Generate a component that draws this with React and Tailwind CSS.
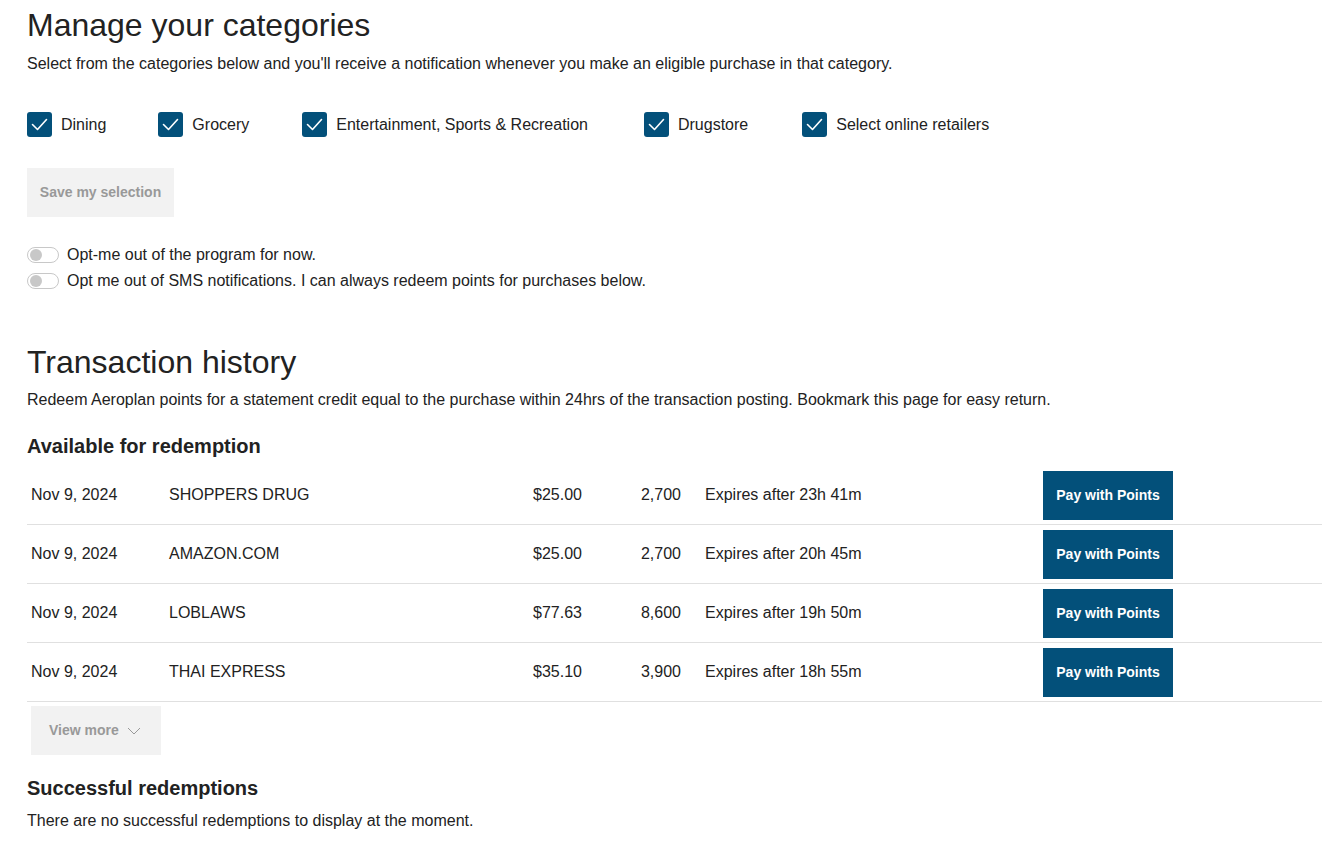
import { useState } from 'react';

const categories = ['Dining', 'Grocery', 'Entertainment, Sports & Recreation', 'Drugstore', 'Select online retailers'];

const gaps = ['mr-[52px]', 'mr-[53px]', 'mr-[56px]', 'mr-[54px]', ''];

const transactions = [
  { date: 'Nov 9, 2024', merchant: 'SHOPPERS DRUG', amount: '$25.00', points: '2,700', expires: 'Expires after 23h 41m' },
  { date: 'Nov 9, 2024', merchant: 'AMAZON.COM', amount: '$25.00', points: '2,700', expires: 'Expires after 20h 45m' },
  { date: 'Nov 9, 2024', merchant: 'LOBLAWS', amount: '$77.63', points: '8,600', expires: 'Expires after 19h 50m' },
  { date: 'Nov 9, 2024', merchant: 'THAI EXPRESS', amount: '$35.10', points: '3,900', expires: 'Expires after 18h 55m' },
];

const Check = () => (
  <svg width="17" height="13" viewBox="0 0 17 13" fill="none">
    <path d="M1.5 6.5l5 5 9-10" stroke="white" strokeWidth="1.6" strokeLinecap="round" strokeLinejoin="round" />
  </svg>
);

const Toggle = ({ label }) => (
  <label className="flex items-center gap-2 h-[26px]">
    <span className="w-[32px] h-[16px] rounded-full border border-[#c8c8c8] bg-white flex items-center px-[2px]">
      <span className="w-[12px] h-[12px] rounded-full bg-[#c8c8c8]" />
    </span>
    <span>{label}</span>
  </label>
);

const App = () => {
  const [selected, setSelected] = useState(categories);

  const toggle = (c) => {
    setSelected(selected.includes(c) ? selected.filter(x => x !== c) : [...selected, c]);
  };

  return (
    <div className="min-h-screen bg-white text-[#222] px-[27px] pt-[6px] font-['Liberation_Sans',Arial,sans-serif] text-[16px]">
      <h1 className="text-[32px] leading-[38px] text-[#222]">Manage your categories</h1>
      <p className="mt-[10px] leading-[20px]">
        Select from the categories below and you'll receive a notification whenever you make an eligible purchase in that category.
      </p>

      <div className="flex items-center mt-[38px]">
        {categories.map((c, i) => (
          <button key={c} onClick={() => toggle(c)} className={`flex items-center gap-[9px] ${gaps[i]}`}>
            <span className={`w-[25px] h-[25px] rounded-[3px] flex items-center justify-center ${selected.includes(c) ? 'bg-[#03507a]' : 'border border-[#999] bg-white'}`}>
              {selected.includes(c) && <Check />}
            </span>
            <span>{c}</span>
          </button>
        ))}
      </div>

      <button className="mt-[31px] h-[49px] w-[147px] bg-[#f2f2f2] text-[#999] text-[14px] font-bold">
        Save my selection
      </button>

      <div className="mt-[25px] flex flex-col">
        <Toggle label="Opt-me out of the program for now." />
        <Toggle label="Opt me out of SMS notifications. I can always redeem points for purchases below." />
      </div>

      <h2 className="mt-[49px] text-[32px] leading-[38px]">Transaction history</h2>
      <p className="mt-[9px] leading-[20px]">
        Redeem Aeroplan points for a statement credit equal to the purchase within 24hrs of the transaction posting. Bookmark this page for easy return.
      </p>

      <h3 className="mt-[24px] text-[20px] leading-[24px] font-bold">Available for redemption</h3>

      <div className="mt-[8px] w-[1295px]">
        {transactions.map((t, i) => (
          <div key={i} className="flex items-center h-[59px] border-b border-[#e0e0e0]">
            <span className="w-[142px] pl-[4px]">{t.date}</span>
            <span className="w-[364px]">{t.merchant}</span>
            <span className="w-[80px]">{t.amount}</span>
            <span className="w-[68px] text-right">{t.points}</span>
            <span className="ml-[24px] w-[338px]">{t.expires}</span>
            <button className="w-[130px] h-[49px] bg-[#03507a] text-white text-[14px] font-bold">Pay with Points</button>
          </div>
        ))}
      </div>

      <button className="mt-[4px] ml-[4px] h-[49px] w-[130px] bg-[#f2f2f2] text-[#999] text-[14px] font-bold flex items-center pl-[18px] gap-[8px]">
        View more
        <svg width="14" height="8" viewBox="0 0 14 8" fill="none">
          <path d="M1 1l6 6 6-6" stroke="#999" strokeWidth="1" />
        </svg>
      </button>

      <h3 className="mt-[21px] text-[20px] leading-[24px] font-bold">Successful redemptions</h3>
      <p className="mt-[11px] leading-[20px]">There are no successful redemptions to display at the moment.</p>
    </div>
  );
};

export default App;
